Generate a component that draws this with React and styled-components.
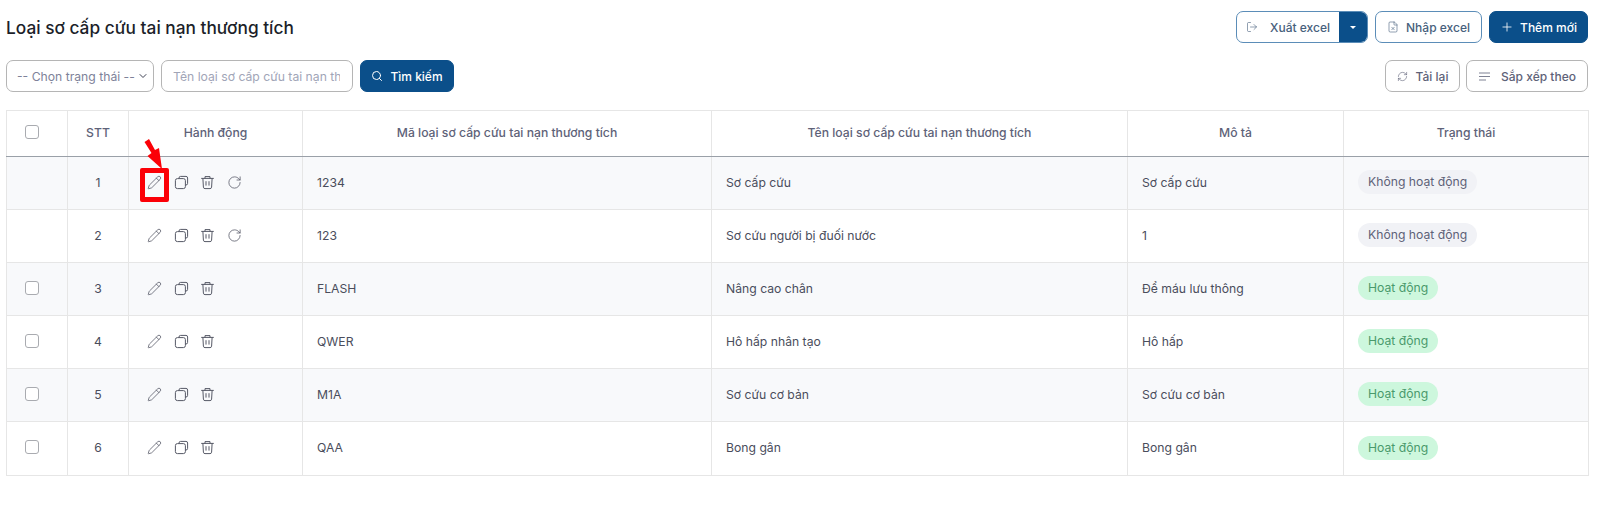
import React from "react";
import styled, { createGlobalStyle } from "styled-components";
import { LogOut, FileX, Plus, Search, RefreshCw, Pencil, RotateCw, ChevronDown } from "lucide-react";

const Global = createGlobalStyle`
  html, body { margin: 0; padding: 0; background: #fff; }
  body { font-family: Inter, "Noto Sans", sans-serif; color: #3f4254; }
  * { box-sizing: border-box; }
`;
const Page = styled.div`
  position: relative;
  padding: 12px 12px 0 6px;
  height: 523px;
  overflow: hidden;
`;
const Bar = styled.div`
  display: flex;
  justify-content: space-between;
  align-items: center;
  height: ${p => p.$h}px;
  margin-bottom: ${p => p.$mb || 0}px;
`;
const Title = styled.h1`
  margin: 0;
  font-size: 17.3px;
  font-weight: 500;
  color: #1c1f2a;
`;
const Group = styled.div`
  display: flex;
  align-items: center;
  gap: ${p => p.$gap ?? 7}px;
`;
const Btn = styled.button`
  display: inline-flex;
  align-items: center;
  justify-content: center;
  gap: ${p => p.$gap ?? 8}px;
  height: 32px;
  width: ${p => p.$w}px;
  padding: 0;
  font: 500 12px Inter, sans-serif;
  border-radius: 7px;
  border: 1px solid ${p => p.$primary ? "#0b4f8a" : p.$blue ? "#5b8db8" : "#b5b5b5"};
  background: ${p => p.$primary ? "#0b4f8a" : "#fff"};
  color: ${p => p.$primary ? "#fff" : p.$blue ? "#47607c" : "#5e6278"};
`;
const Split = styled.div`
  display: flex;
  height: 32px;
  width: 132px;
  border: 1px solid #5b8db8;
  border-radius: 7px;
  overflow: hidden;
`;
const SplitMain = styled.div`
  flex: 1;
  display: flex;
  align-items: center;
  justify-content: center;
  gap: 12px;
  font-size: 12px;
  font-weight: 500;
  color: #47607c;
`;
const SplitCaret = styled.div`
  width: 28px;
  background: #0b4f8a;
  display: flex;
  align-items: center;
  justify-content: center;
  &::after {
    content: "";
    border-left: 3px solid transparent;
    border-right: 3px solid transparent;
    border-top: 3px solid #fff;
  }
`;
const SelectBox = styled.div`
  width: 148px;
  height: 32px;
  border: 1px solid #b5b5b5;
  border-radius: 7px;
  display: flex;
  align-items: center;
  justify-content: space-between;
  padding: 0 4px 0 10px;
  font-size: 12.2px;
  color: #7e8299;
  white-space: nowrap;
  svg { color: #3f4254; }
`;
const InputBox = styled.input`
  width: 192px;
  height: 32px;
  border: 1px solid #b5b5b5;
  border-radius: 7px;
  padding: 0 12px 0 11px;
  font: 12.2px Inter, sans-serif;
  outline: none;
  &::placeholder { color: #a1a5b7; opacity: 1; }
`;
const Table = styled.table`
  width: 1582px;
  table-layout: fixed;
  border-collapse: collapse;
  font-size: 12.2px;
`;
const Th = styled.th`
  height: 46px;
  border: 1px solid #e6e6e6;
  border-bottom: 1px solid #9aa0a8;
  padding: 0 0 2px;
  font-weight: 500;
  color: #5e6278;
  text-align: center;
`;
const Row = styled.tr`
  height: ${p => p.$h}px;
  background: ${p => p.$odd ? "#f8f9fb" : "#fff"};
`;
const Td = styled.td`
  border: 1px solid #e6e6e6;
  padding: 0 ${p => p.$center ? 0 : 14}px 2px;
  text-align: ${p => p.$center ? "center" : "left"};
  color: #4a4d5c;
`;
const CheckCell = styled(Td)`
  padding-right: 10px;
`;
const CheckHead = styled(Th)`
  padding-right: 10px;
`;
const Check = styled.span`
  display: inline-block;
  width: 14px;
  height: 14px;
  border: 1px solid #a9abb0;
  border-radius: 3px;
  background: #fff;
  vertical-align: middle;
  position: relative;
  top: -1px;
`;
const Actions = styled.div`
  display: flex;
  align-items: center;
  gap: 11.5px;
  padding-left: 4px;
  color: #565966;
`;
const Badge = styled.span`
  display: inline-block;
  padding: 0 10px;
  height: 24px;
  line-height: 24px;
  border-radius: 12px;
  background: ${p => p.$on ? "#cdf7dd" : "#f1f2f6"};
  color: ${p => p.$on ? "#4a9a6c" : "#5e6278"};
`;
const Highlight = styled.div`
  position: absolute;
  left: 140px;
  top: 168px;
  width: 29px;
  height: 34px;
  border: 5px solid #fb0007;
  border-radius: 2px;
`;
const Arrow = styled.svg`
  position: absolute;
  left: 142px;
  top: 137px;
`;

const CopyIcon = () => (
  <svg width="15" height="15" viewBox="0 0 15 15" fill="none" stroke="currentColor" strokeWidth="1">
    <path d="M5 3.4V3a1.6 1.6 0 0 1 1.6-1.6H12A1.6 1.6 0 0 1 13.6 3v5.4A1.6 1.6 0 0 1 12 10h-.6" />
    <rect x="1.4" y="3.6" width="10" height="10" rx="2" />
  </svg>
);
const TrashIcon = () => (
  <svg width="15" height="15" viewBox="0 0 15 15" fill="none" stroke="currentColor" strokeWidth="1" strokeLinecap="round">
    <path d="M1.6 3.4h11.8" />
    <path d="M5 3.2V1.6h5v1.6" />
    <path d="M2.9 3.6l.5 8.6a1.6 1.6 0 0 0 1.6 1.4h5a1.6 1.6 0 0 0 1.6-1.4l.5-8.6" />
    <path d="M6 6.6v3.6M9 6.6v3.6" />
  </svg>
);
const LinesIcon = () => (
  <svg width="13" height="13" viewBox="0 0 13 13" fill="none" stroke="currentColor" strokeWidth="0.8">
    <path d="M1 3h11M1 6.5h11M1 10h7" />
  </svg>
);

const rows = [
  ["1", "1234", "Sơ cấp cứu", "Sơ cấp cứu", false],
  ["2", "123", "Sơ cứu người bị đuối nước", "1", false],
  ["3", "FLASH", "Nâng cao chân", "Để máu lưu thông", true],
  ["4", "QWER", "Hô hấp nhân tạo", "Hô hấp", true],
  ["5", "M1A", "Sơ cứu cơ bản", "Sơ cứu cơ bản", true],
  ["6", "QAA", "Bong gân", "Bong gân", true],
];
const ic = { size: 15, strokeWidth: 1.25 };

export default function App() {
  return (
    <Page>
      <Global />
      <Bar $h={30} $mb={18}>
        <Title>Loại sơ cấp cứu tai nạn thương tích</Title>
        <Group>
          <Split>
            <SplitMain><LogOut size={12} strokeWidth={1.2} />Xuất excel</SplitMain>
            <SplitCaret />
          </Split>
          <Btn $blue $w={107} $gap={7}><FileX size={12} strokeWidth={1.2} />Nhập excel</Btn>
          <Btn $primary $w={99} $gap={6}><Plus size={14} strokeWidth={1.4} />Thêm mới</Btn>
        </Group>
      </Bar>
      <Bar $h={32} $mb={18}>
        <Group>
          <SelectBox>-- Chọn trạng thái --<ChevronDown size={12} /></SelectBox>
          <InputBox placeholder="Tên loại sơ cấp cứu tai nạn thương tích" />
          <Btn $primary $w={94} $gap={7}><Search size={12} />Tìm kiếm</Btn>
        </Group>
        <Group $gap={6}>
          <Btn $w={75} $gap={8}><RefreshCw size={11} strokeWidth={1.3} />Tải lại</Btn>
          <Btn $w={122} $gap={10}><LinesIcon />Sắp xếp theo</Btn>
        </Group>
      </Bar>
      <Table>
        <colgroup>
          <col style={{ width: 61 }} />
          <col style={{ width: 61 }} />
          <col style={{ width: 174 }} />
          <col style={{ width: 409 }} />
          <col style={{ width: 416 }} />
          <col style={{ width: 216 }} />
          <col style={{ width: 245 }} />
        </colgroup>
        <thead>
          <tr>
            <CheckHead><Check /></CheckHead>
            <Th>STT</Th>
            <Th>Hành động</Th>
            <Th>Mã loại sơ cấp cứu tai nạn thương tích</Th>
            <Th>Tên loại sơ cấp cứu tai nạn thương tích</Th>
            <Th>Mô tả</Th>
            <Th>Trạng thái</Th>
          </tr>
        </thead>
        <tbody>
          {rows.map((r, i) => (
            <Row key={r[0]} $odd={i % 2 === 0} $h={i === 5 ? 54 : 53}>
              <CheckCell $center>{r[4] && <Check />}</CheckCell>
              <Td $center>{r[0]}</Td>
              <Td>
                <Actions>
                  <Pencil {...ic} />
                  <CopyIcon />
                  <TrashIcon />
                  {!r[4] && <RotateCw {...ic} />}
                </Actions>
              </Td>
              <Td>{r[1]}</Td>
              <Td>{r[2]}</Td>
              <Td>{r[3]}</Td>
              <Td><Badge $on={r[4]}>{r[4] ? "Hoạt động" : "Không hoạt động"}</Badge></Td>
            </Row>
          ))}
        </tbody>
      </Table>
      <Highlight />
      <Arrow width="24" height="33" viewBox="0 0 24 33">
        <path d="M2.5 5 L7 2 L13 13 L17 11 L20 32 L5.5 19 L9.5 16 Z" fill="#fb0007" />
      </Arrow>
    </Page>
  );
}
